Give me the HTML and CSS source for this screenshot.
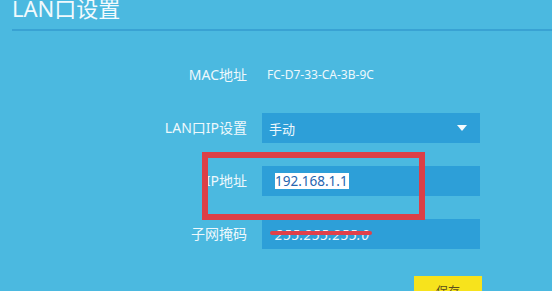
FILE: index.html
```html
<!DOCTYPE html>
<html lang="zh-CN">
<head>
    <meta charset="UTF-8">
    <title>LAN口设置</title>
    <link rel="stylesheet" href="styles.css">
</head>
<body>

    <div class="page">
        <h1 class="title">LAN口设置</h1>

        <div class="form">
            <label class="label">MAC地址</label>
            <div class="value">FC-D7-33-CA-3B-9C</div>

            <label class="label" for="mode">LAN口IP设置</label>
            <div class="field select">
                <span>手动</span>
                <span class="arrow"></span>
            </div>

            <label class="label" for="ip">IP地址</label>
            <div class="field"><span class="selected">192.168.1.1</span></div>

            <label class="label" for="mask">子网掩码</label>
            <div class="field mask">
                <span class="mask-text">255.255.255.0</span>
                <span class="strike"></span>
            </div>

            <div class="actions">
                <button class="save">保存</button>
            </div>
        </div>

        <div class="highlight"></div>
    </div>

</body>
</html>
```

FILE: styles.css
```css
body {
    margin: 0;
    background-color: #4bb9e0;
    font-family: "Noto Sans", "Noto Sans CJK SC", sans-serif;
    overflow: hidden;
}
.page {
    position: relative;
    width: 552px;
    height: 291px;
    overflow: hidden;
}
.title {
    margin: 0 0 0 12px;
    height: 29px;
    border-bottom: 2px solid #39a2d3;
    font-size: 22px;
    font-weight: normal;
    line-height: 16px;
    color: #f2fafd;
}
.form {
    display: grid;
    grid-template-columns: 247px 218px;
    column-gap: 15px;
    row-gap: 23px;
    margin-top: 29px;
    align-items: center;
}
.label {
    text-align: right;
    font-size: 14px;
    color: #eef8fc;
    height: 30px;
    line-height: 30px;
}
.value {
    font-size: 12px;
    color: #eef8fc;
    padding-left: 5px;
    line-height: 30px;
}
.field {
    height: 30px;
    background-color: #2d9fd8;
    display: flex;
    align-items: center;
    padding: 0 13px;
    font-size: 13px;
    color: #eef8fc;
    position: relative;
}
.select {
    justify-content: space-between;
    padding-left: 7px;
}
.arrow {
    width: 0;
    height: 0;
    border-left: 5px solid transparent;
    border-right: 5px solid transparent;
    border-top: 6px solid #f4fbfe;
}
.selected {
    background-color: #ffffff;
    color: #2766b0;
    font-size: 13.5px;
    line-height: 16px;
    padding-right: 1px;
}
.mask {
    padding-left: 13px;
}
.mask-text {
    font-size: 14px;
    color: #e6f3fa;
    font-style: italic;
    letter-spacing: 0.5px;
}
.strike {
    position: absolute;
    left: 8px;
    top: 12px;
    width: 102px;
    height: 4px;
    border-radius: 2px;
    background-color: #e0404a;
}
.actions {
    grid-column: 2;
    display: flex;
    justify-content: flex-end;
    margin-top: 4px;
}
.save {
    width: 68px;
    height: 30px;
    margin-right: -2px;
    border: none;
    background-color: #f7e31c;
    color: #5a4e1c;
    font-family: "Noto Sans CJK SC", sans-serif;
    font-size: 12px;
    padding: 0;
    line-height: 30px;
}
.highlight {
    position: absolute;
    left: 202px;
    top: 152px;
    width: 211px;
    height: 56px;
    border: 6px solid #dc3f47;
}
```
